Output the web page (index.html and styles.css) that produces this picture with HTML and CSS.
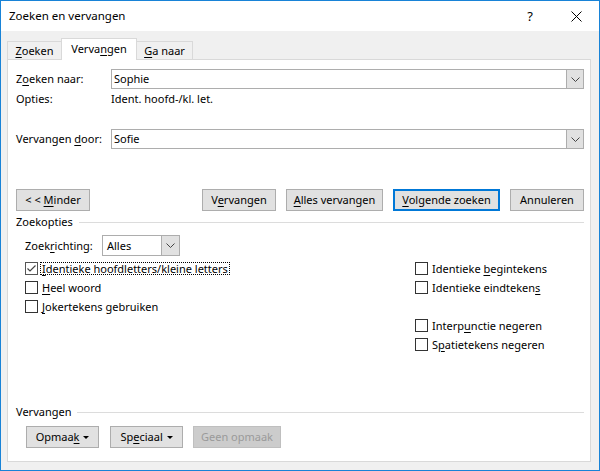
FILE: index.html
```html
<!DOCTYPE html>
<html lang="nl">
<head>
<meta charset="utf-8">
<title>Zoeken en vervangen</title>
<link rel="stylesheet" href="styles.css">
</head>
<body>
<div class="window">
  <div class="titlebar">
    <span class="title">Zoeken en vervangen</span>
    <span class="cap-btn help">?</span>
    <span class="cap-btn close"><svg width="11" height="11" viewBox="0 0 11 11"><path d="M0.5 0.5L10.5 10.5M10.5 0.5L0.5 10.5" stroke="#000" stroke-width="1"/></svg></span>
  </div>
  <div class="body">
    <div class="tabs">
      <div class="tab tab-zoeken"><u>Z</u>oeken</div>
      <div class="tab tab-vervangen active">Verva<u>n</u>gen</div>
      <div class="tab tab-ganaar"><u>G</u>a naar</div>
    </div>
    <div class="panel">
      <div class="field">
        <span class="lbl">Z<u>o</u>eken naar:</span>
        <div class="combo">
          <span class="combo-text">Sophie</span>
          <span class="combo-btn"><svg width="9" height="5" viewBox="0 0 9 5"><polyline points="0.5,0.5 4.5,4.5 8.5,0.5" fill="none" stroke="#444" stroke-width="1"/></svg></span>
        </div>
      </div>
      <div class="field opties">
        <span class="lbl">Opties:</span>
        <span class="opt-val">Ident. hoofd-/kl. let.</span>
      </div>
      <div class="field replace">
        <span class="lbl">Vervangen <u>d</u>oor:</span>
        <div class="combo">
          <span class="combo-text">Sofie</span>
          <span class="combo-btn"><svg width="9" height="5" viewBox="0 0 9 5"><polyline points="0.5,0.5 4.5,4.5 8.5,0.5" fill="none" stroke="#444" stroke-width="1"/></svg></span>
        </div>
      </div>
      <div class="btn-row">
        <button class="btn w-minder">&lt; &lt; <u>M</u>inder</button>
        <div class="btn-group">
          <button class="btn w-vervangen">V<u>e</u>rvangen</button>
          <button class="btn w-alles"><u>A</u>lles vervangen</button>
          <button class="btn w-volgende default"><u>V</u>olgende zoeken</button>
          <button class="btn w-annuleren">Annuleren</button>
        </div>
      </div>
      <div class="section-head">
        <span class="section-title">Zoekopties</span>
        <span class="section-line"></span>
      </div>
      <div class="direction">
        <span class="dir-lbl">Zoek<u>r</u>ichting:</span>
        <div class="select">
          <span class="select-text">Alles</span>
          <span class="select-btn"><svg width="9" height="5" viewBox="0 0 9 5"><polyline points="0.5,0.5 4.5,4.5 8.5,0.5" fill="none" stroke="#444" stroke-width="1"/></svg></span>
        </div>
      </div>
      <div class="checks">
        <div class="check-col left">
          <div class="check">
            <span class="box checked"><svg width="11" height="11" viewBox="0 0 11 11"><polyline points="1.5,5.5 4,8 9.5,2.5" fill="none" stroke="#444" stroke-width="1.2"/></svg></span>
            <span class="check-lbl focus"><u>I</u>dentieke hoofdletters/kleine letters</span>
          </div>
          <div class="check">
            <span class="box"></span>
            <span class="check-lbl"><u>H</u>eel woord</span>
          </div>
          <div class="check">
            <span class="box"></span>
            <span class="check-lbl"><u>J</u>okertekens gebruiken</span>
          </div>
        </div>
        <div class="check-col right">
          <div class="check">
            <span class="box"></span>
            <span class="check-lbl">Identieke <u>b</u>egintekens</span>
          </div>
          <div class="check">
            <span class="box"></span>
            <span class="check-lbl">Identieke eindteken<u>s</u></span>
          </div>
          <div class="check spacer"></div>
          <div class="check">
            <span class="box"></span>
            <span class="check-lbl">Interp<u>u</u>nctie negeren</span>
          </div>
          <div class="check">
            <span class="box"></span>
            <span class="check-lbl">S<u>p</u>atietekens negeren</span>
          </div>
        </div>
      </div>
      <div class="section-head bottom">
        <span class="section-title">Vervangen</span>
        <span class="section-line"></span>
      </div>
      <div class="bottom-row">
        <button class="btn w-opmaak">Opmaa<u>k</u> <span class="tri"></span></button>
        <button class="btn w-speciaal">Sp<u>e</u>ciaal <span class="tri"></span></button>
        <button class="btn w-geen disabled" disabled>Geen opmaak</button>
      </div>
    </div>
  </div>
</div>
</body>
</html>
```

FILE: styles.css
```css
* { box-sizing: border-box; }

html, body {
  margin: 0;
  padding: 0;
  background: #f0f0f0;
}

body {
  font-family: "Segoe UI", "Noto Sans", sans-serif;
  font-size: 11px;
  line-height: 16px;
  color: #000;
}

u {
  text-decoration: underline;
  text-underline-offset: 2px;
}

.window {
  width: 600px;
  height: 471px;
  border: 1px solid #1883d7;
  background: #f0f0f0;
  display: flex;
  flex-direction: column;
}

.titlebar {
  height: 30px;
  flex: none;
  background: #fff;
  display: flex;
  align-items: center;
  padding-left: 8px;
}

.title {
  flex: 1;
  font-size: 11.5px;
}

.cap-btn {
  width: 46px;
  height: 30px;
  display: flex;
  align-items: center;
  justify-content: center;
}

.help {
  font-size: 13px;
}

.body {
  flex: 1;
  display: flex;
  flex-direction: column;
  padding: 7px 8px 8px 6px;
}

.tabs {
  height: 21px;
  display: flex;
  align-items: flex-end;
  flex: none;
}

.tab {
  height: 18px;
  border: 1px solid #d9d9d9;
  border-bottom: none;
  background: #f0f0f0;
  display: flex;
  align-items: center;
  justify-content: center;
}

.tab-zoeken { width: 54px; border-right: none; }
.tab-vervangen { width: 76px; }
.tab-ganaar { width: 56px; border-left: none; }

.tab.active {
  height: 22px;
  background: #fff;
  margin-bottom: -1px;
  position: relative;
  z-index: 2;
  padding-bottom: 2px;
}

.panel {
  flex: 1;
  background: #fff;
  border: 1px solid #d9d9d9;
  display: flex;
  flex-direction: column;
  padding: 9px 6px 13px 8px;
}

.field {
  display: flex;
  align-items: center;
  height: 20px;
  flex: none;
}

.lbl {
  width: 95px;
  flex: none;
}

.replace {
  margin-top: 20px;
}

.combo {
  flex: 1;
  height: 20px;
  border: 1px solid #adadad;
  display: flex;
  align-items: stretch;
  background: #fff;
}

.combo-text {
  flex: 1;
  padding-left: 2px;
  display: flex;
  align-items: center;
}

.combo-btn,
.select-btn {
  width: 17px;
  background: #e1e1e1;
  border-left: 1px solid #adadad;
  display: flex;
  align-items: center;
  justify-content: center;
}

.btn-row {
  margin-top: 40px;
  height: 22px;
  display: flex;
  justify-content: space-between;
  flex: none;
}

.btn-group {
  display: flex;
  gap: 10px;
}

.btn {
  height: 22px;
  padding: 0;
  margin: 0;
  border: 1px solid #adadad;
  background: #e1e1e1;
  font: inherit;
  line-height: 18px;
  color: #000;
  text-align: center;
  white-space: pre;
}

.btn.default {
  border: 2px solid #0078d7;
}

.btn.disabled {
  background: #cccccc;
  border-color: #bfbfbf;
  color: #9a9a9a;
}

.w-minder { width: 74px; }
.w-vervangen { width: 74px; }
.w-alles { width: 97px; }
.w-volgende { width: 107px; }
.w-annuleren { width: 74px; }
.w-opmaak { width: 73px; }
.w-speciaal { width: 73px; margin-left: 1px; }
.w-geen { width: 88px; }

.section-head {
  margin-top: 3px;
  height: 16px;
  display: flex;
  align-items: center;
  flex: none;
}

.section-title {
  margin-right: 6px;
}

.section-line {
  flex: 1;
  height: 1px;
  background: #dcdcdc;
}

.section-head.bottom {
  margin-top: auto;
}

.direction {
  margin-top: 5px;
  height: 21px;
  display: flex;
  align-items: center;
  padding-left: 9px;
  flex: none;
}

.dir-lbl {
  width: 77px;
}

.select {
  width: 78px;
  height: 21px;
  border: 1px solid #adadad;
  display: flex;
  align-items: stretch;
  background: #fff;
}

.select-text {
  flex: 1;
  padding-left: 4px;
  display: flex;
  align-items: center;
}

.select-btn {
  width: 18px;
}

.checks {
  margin-top: 6px;
  display: grid;
  grid-template-columns: 390px 1fr;
  padding-left: 9px;
}

.check {
  height: 19px;
  display: flex;
  align-items: flex-start;
}

.box {
  width: 13px;
  height: 13px;
  border: 1px solid #333;
  background: #fff;
  flex: none;
  display: flex;
  align-items: center;
  justify-content: center;
}

.box.checked {
  border-color: #555;
}

.check-lbl {
  margin-left: 2px;
  padding: 0 1px;
  border: 1px dotted transparent;
  height: 13px;
  line-height: 11px;
  white-space: nowrap;
}

.check-lbl.focus {
  border-color: #000;
}

.bottom-row {
  margin-top: 6px;
  height: 22px;
  display: flex;
  gap: 10px;
  padding-left: 10px;
  flex: none;
}

.tri {
  display: inline-block;
  vertical-align: middle;
  width: 0;
  height: 0;
  border-left: 3px solid transparent;
  border-right: 3px solid transparent;
  border-top: 3px solid #000;
  margin-left: 1px;
  margin-top: -2px;
}
```
